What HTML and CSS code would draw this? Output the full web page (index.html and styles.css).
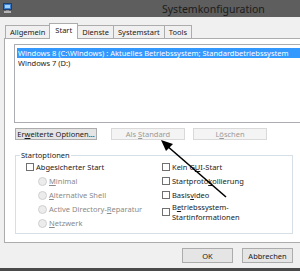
FILE: index.html
```html
<!DOCTYPE html>
<html>
<head>
<meta charset="utf-8">
<link rel="stylesheet" href="styles.css">
</head>
<body>
<div class="window">
  <div class="titlebar">
    <svg class="appicon" width="9" height="10" viewBox="0 0 9 10">
      <rect x="0.5" y="0.5" width="8" height="6" fill="#3a7fd0" stroke="#1d3f70" stroke-width="1"/>
      <rect x="2" y="2" width="5" height="3" fill="#9fd0ff"/>
      <rect x="3" y="7" width="3" height="1" fill="#8a8a8a"/>
      <rect x="1" y="8" width="7" height="2" fill="#b5b5b5"/>
    </svg>
    <span class="title">Systemkonfiguration</span>
  </div>
  <div class="tabs">
    <div class="tab">Allgemein</div>
    <div class="tab active">Start</div>
    <div class="tab">Dienste</div>
    <div class="tab">Systemstart</div>
    <div class="tab">Tools</div>
  </div>
  <div class="panel">
    <div class="listbox">
      <div class="item selected">Windows 8 (C:\Windows) : Aktuelles Betriebssystem; Standardbetriebssystem</div>
      <div class="item">Windows 7 (D:)</div>
    </div>
    <div class="btnrow">
      <div class="btn wide"><span>Er<u>w</u>eiterte Optionen...</span></div>
      <div class="btn disabled std"><span>Als <u>S</u>tandard</span></div>
      <div class="btn disabled"><span>L<u>ö</u>schen</span></div>
    </div>
    <fieldset class="group">
      <legend>Startoptionen</legend>
      <div class="cols">
        <div class="col left">
          <div class="opt"><span class="cb"></span><span>Abgesicherter Start</span></div>
          <div class="opt sub dis"><span class="rb"></span><span><u>M</u>inimal</span></div>
          <div class="opt sub dis"><span class="rb"></span><span><u>A</u>lternative Shell</span></div>
          <div class="opt sub dis"><span class="rb"></span><span>Active Directory-<u>R</u>eparatur</span></div>
          <div class="opt sub dis"><span class="rb"></span><span><u>N</u>etzwerk</span></div>
        </div>
        <div class="col right">
          <div class="opt"><span class="cb"></span><span>Kein G<u>U</u>I-Start</span></div>
          <div class="opt"><span class="cb"></span><span>Startproto<u>k</u>ollierung</span></div>
          <div class="opt"><span class="cb"></span><span>Basis<u>v</u>ideo</span></div>
          <div class="opt two"><span class="cb"></span><span class="twotext">B<u>e</u>triebssystem-<br>Startinformationen</span></div>
        </div>
      </div>
    </fieldset>
  </div>
  <div class="footer">
    <div class="btn fbtn"><span>OK</span></div>
    <div class="btn fbtn"><span>Abbrechen</span></div>
  </div>
  <div class="bottombar"></div>
  <svg class="arrow" width="300" height="271" viewBox="0 0 300 271">
    <line x1="226" y1="197" x2="166" y2="145" stroke="#000" stroke-width="1.6"/>
    <polygon points="161,140 173,144 166,151" fill="#000"/>
  </svg>
</div>
</body>
</html>
```

FILE: styles.css
```css
* { box-sizing: border-box; }
html, body { margin: 0; padding: 0; }
body {
  width: 300px;
  height: 271px;
  overflow: hidden;
  background: #f0f0f0;
  font-family: "Noto Sans", "Open Sans", sans-serif;
  font-size: 7.5px;
  color: #1a1a1a;
}
u { text-decoration: underline; text-underline-offset: 1px; }
.window {
  position: relative;
  width: 300px;
  height: 271px;
  display: flex;
  flex-direction: column;
}
.titlebar {
  height: 17px;
  background: #5e5e5e;
  display: flex;
  align-items: center;
  position: relative;
  flex: none;
}
.appicon { margin-left: 3px; margin-top: -2px; }
.title {
  position: absolute;
  left: 162px;
  top: 2px;
  font-size: 10.5px;
  color: #1c1c1c;
}
.tabs {
  display: flex;
  align-items: flex-end;
  margin-top: 6px;
  padding-left: 5px;
  height: 15px;
  flex: none;
  position: relative;
  z-index: 2;
}
.tab {
  height: 13px;
  padding: 0 4px;
  line-height: 12px;
  border: 1px solid #acacac;
  border-bottom: none;
  background: #f0f0f0;
  margin-right: -1px;
}
.tab.active {
  height: 16px;
  background: #fff;
  line-height: 13px;
  margin-bottom: -1px;
  padding: 0 5px;
  position: relative;
  z-index: 3;
}
.panel {
  margin-left: 4px;
  width: 310px;
  height: 205px;
  background: #fff;
  border: 1px solid #acacac;
  padding: 5px 0 0 9px;
  flex: none;
}
.listbox {
  height: 79px;
  border: 1px solid #abadb3;
  padding: 3px 2px;
  background: #fff;
}
.item {
  height: 10px;
  line-height: 10px;
  padding-left: 1px;
  white-space: nowrap;
}
.item.selected {
  background: #3399ff;
  color: #fff;
}
.btnrow {
  display: flex;
  gap: 8px;
  margin-top: 5px;
  padding-left: 1px;
}
.btn {
  height: 12px;
  border: 1px solid #acacac;
  background: #e5e5e5;
  display: flex;
  align-items: center;
  justify-content: center;
  width: 74px;
  white-space: nowrap;
}
.btn.wide { width: 82px; }
.btn.std { margin-left: 6px; }
.btn.disabled {
  background: #f4f4f4;
  border-color: #d9d9d9;
  color: #9a9a9a;
}
.group {
  margin: 11px 0 0 1px;
  width: 278px;
  height: 83px;
  border: 1px solid #d5dfe5;
  padding: 1px 0 0 0;
}
.group legend {
  padding: 0 1px;
  margin-left: 4px;
  line-height: 8px;
}
.cols {
  display: flex;
  padding-left: 10px;
  margin-top: 2px;
}
.col { display: flex; flex-direction: column; gap: 4px; }
.col.left { width: 136px; }
.opt {
  display: flex;
  align-items: center;
  height: 10px;
  white-space: nowrap;
}
.opt.sub { padding-left: 12px; }
.opt.dis { color: #8a8a8a; }
.opt.two { height: 20px; align-items: flex-start; margin-top: -2px; }
.twotext { line-height: 10px; }
.opt.two .cb { margin-top: 6px; }
.cb {
  width: 8px;
  height: 8px;
  border: 1px solid #707070;
  background: #fff;
  margin-right: 2px;
  flex: none;
}
.rb {
  width: 9px;
  height: 9px;
  border-radius: 50%;
  border: 1px solid #d0d0d0;
  background: #ececec;
  margin-right: 2px;
  flex: none;
}
.footer {
  display: flex;
  justify-content: flex-end;
  gap: 9px;
  padding-right: 7px;
  margin-top: 5px;
  flex: none;
}
.fbtn { width: 51px; height: 15px; }
.bottombar {
  position: absolute;
  left: 0;
  right: 0;
  bottom: 0;
  height: 3px;
  background: #4a4a4a;
}
.arrow { position: absolute; left: 0; top: 0; pointer-events: none; }
```
